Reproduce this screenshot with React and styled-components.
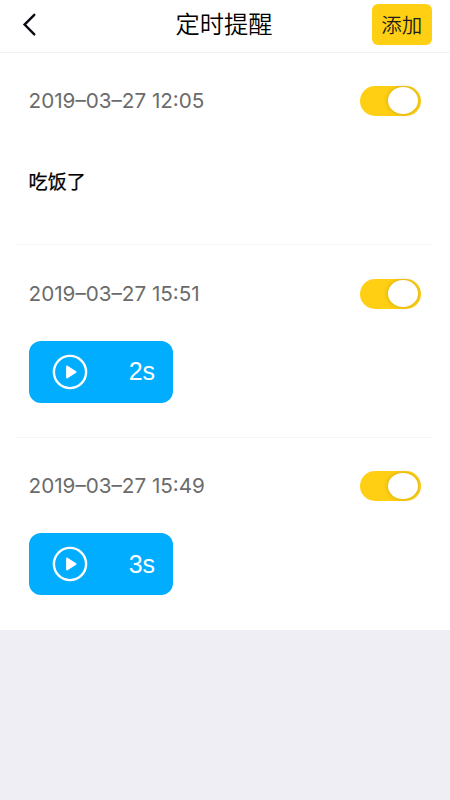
import React from 'react';
import styled, { createGlobalStyle } from 'styled-components';

const reminders = [
  { id: 1, time: '2019–03–27 12:05', text: '吃饭了' },
  { id: 2, time: '2019–03–27 15:51', voice: '2s' },
  { id: 3, time: '2019–03–27 15:49', voice: '3s' },
];

const App = () => {
  return (
    <Page>
      <GlobalStyle />
      <Header>
        <BackButton aria-label="返回">
          <svg width="14" height="26" viewBox="0 0 14 26" fill="none">
            <path d="M12.3 2.8L2.6 12.6L12.3 22.4" stroke="#0b0b12" strokeWidth="2.4" strokeLinecap="round" />
          </svg>
        </BackButton>
        <Title>定时提醒</Title>
        <AddButton>添加</AddButton>
      </Header>
      <List>
        {reminders.map((item) => (
          <Item key={item.id}>
            <ItemTop>
              <Time>{item.time}</Time>
              <Switch role="switch" aria-checked="true">
                <Knob />
              </Switch>
            </ItemTop>
            {item.text && <Message>{item.text}</Message>}
            {item.voice && (
              <Voice>
                <svg width="36" height="36" viewBox="0 0 36 36">
                  <circle cx="18" cy="18" r="16.1" fill="none" stroke="#fff" strokeWidth="2.4" />
                  <path d="M15 12.4L23.6 18L15 23.6Z" fill="#fff" stroke="#fff" strokeWidth="1.8" strokeLinejoin="round" />
                </svg>
                <Seconds>{item.voice}</Seconds>
              </Voice>
            )}
          </Item>
        ))}
      </List>
    </Page>
  );
};

export default App;

const GlobalStyle = createGlobalStyle`
  * {
    box-sizing: border-box;
  }
  body {
    margin: 0;
    background: #efeef4;
    font-family: Inter, "Noto Sans CJK SC", sans-serif;
  }
  button {
    border: 0;
    padding: 0;
    font-family: inherit;
  }
`;

const Page = styled.div`
  width: 100%;
  min-height: 800px;
  background: #efeef4;
`;

const Header = styled.div`
  display: grid;
  grid-template-columns: 90px 1fr 92px;
  align-items: center;
  height: 53px;
  padding-bottom: 3px;
  background: #fff;
  border-bottom: 1px solid #f3f3f3;
`;

const BackButton = styled.button`
  display: flex;
  justify-self: start;
  margin-left: 22px;
  background: none;
`;

const Title = styled.div`
  padding-bottom: 1px;
  text-align: center;
  font-size: 24.3px;
  font-weight: 350;
  line-height: 36px;
  color: #000;
`;

const AddButton = styled.button`
  justify-self: end;
  width: 60.5px;
  height: 41px;
  margin-right: 18px;
  padding-bottom: 2px;
  border-radius: 6px;
  background: #ffcf13;
  font-size: 20.5px;
  font-weight: 350;
  color: #1c1c1c;
`;

const List = styled.div`
  padding-left: 16px;
  padding-right: 17px;
  background: #fff;
`;

const Item = styled.div`
  height: 192.5px;
  padding: 33.3px 12px 0 12.6px;
  border-bottom: 1px solid #f6f6f6;

  &:first-child {
    height: 192.3px;
    padding-top: 32.7px;
  }

  &:last-child {
    height: 191.8px;
    border-bottom: 0;
  }
`;

const ItemTop = styled.div`
  display: flex;
  align-items: center;
  justify-content: space-between;
  height: 30px;
`;

const Time = styled.div`
  padding-bottom: 1px;
  font-size: 20.65px;
  color: #6b6b6b;
`;

const Switch = styled.div`
  display: flex;
  align-items: center;
  justify-content: flex-end;
  width: 61px;
  height: 30px;
  padding-right: 3.5px;
  border-radius: 15px;
  background: #ffcf13;
`;

const Knob = styled.div`
  width: 30px;
  height: 26.5px;
  border-radius: 50%;
  background: #fff;
  box-shadow: 0 0 4px rgba(110, 90, 0, 0.35);
`;

const Message = styled.div`
  margin-top: 52px;
  font-size: 19.1px;
  font-weight: 400;
  line-height: 28px;
  color: #000;
  -webkit-text-stroke: 0.25px #000;
`;

const Voice = styled.div`
  display: flex;
  align-items: center;
  justify-content: space-between;
  width: 144.8px;
  height: 62px;
  margin-top: 32px;
  padding: 0 18.3px 0 23px;
  border-radius: 12px;
  background: #00adff;
`;

const Seconds = styled.span`
  font-family: "Liberation Sans", sans-serif;
  font-size: 25px;
  color: #fff;
`;
